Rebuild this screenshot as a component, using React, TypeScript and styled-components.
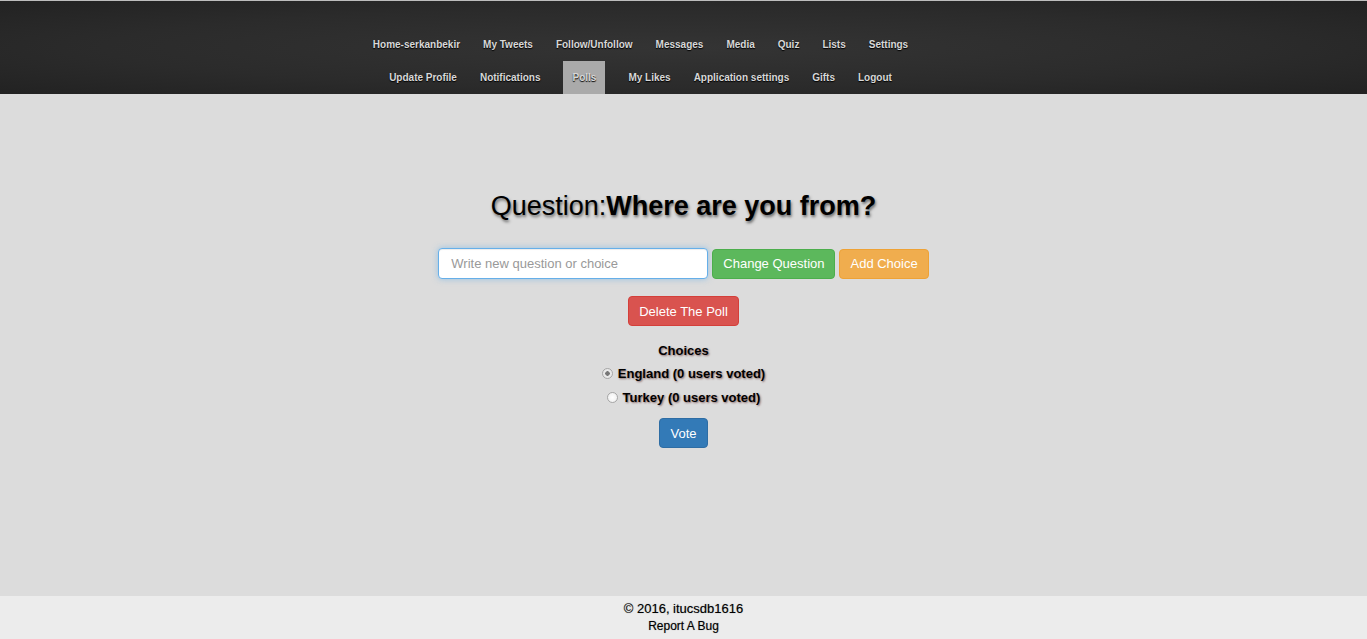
import styled, { createGlobalStyle } from "styled-components";

const GlobalStyle = createGlobalStyle`
    html, body {
        margin: 0;
        padding: 0;
        height: 100%;
    }

    body {
        background-color: #dcdcdc;
        font-family: "Liberation Sans", Arial, sans-serif;
    }

    #root {
        min-height: 100%;
        display: flex;
        flex-direction: column;
    }
`

const Page = styled.div`
    display: flex;
    flex-direction: column;
    min-height: 100vh;
`

const Header = styled.header`
    border-top: 1px solid #bdbdbd;
    height: 94px;
    box-sizing: border-box;
    padding-top: 27px;
    background: radial-gradient(ellipse at center, #343434 0%, #2b2b2b 60%, #222 100%);
`

const NavRow = styled.ul`
    display: flex;
    flex-direction: row;
    justify-content: center;
    gap: 3px;
    list-style: none;
    margin: 0;
    padding: 0 86px 0 0;
    height: 33px;
`

const NavItem = styled.li`
    padding: 0 10px;
    height: 33px;
`

const NavLink = styled.a<{ $active?: boolean }>`
    display: block;
    padding: ${(p) => (p.$active ? "0 9px" : "0")};
    height: 33px;
    line-height: 33px;
    font-size: 10px;
    font-weight: bold;
    color: #d8d8d8;
    text-shadow: 0 1px 1px #000;
    text-decoration: none;
    cursor: pointer;
    white-space: nowrap;
    background-color: ${(p) => (p.$active ? "#aaaaaa" : "transparent")};
`

const Main = styled.main`
    flex: 1;
    display: flex;
    flex-direction: column;
    align-items: center;
    padding-top: 97px;
`

const Title = styled.h1`
    margin: 0;
    font-size: 27px;
    line-height: 30px;
    font-weight: normal;
    color: #000;
    text-shadow: 1px 2px 3px #666;

    b {
        font-weight: bold;
    }
`

const FormRow = styled.div`
    display: flex;
    flex-direction: row;
    align-items: center;
    gap: 4px;
    margin-top: 27px;
`

const TextInput = styled.input`
    width: 270px;
    height: 31px;
    box-sizing: border-box;
    padding: 0 12px;
    font-family: "Liberation Sans", Arial, sans-serif;
    font-size: 13px;
    color: #555;
    background: #fff;
    border: 1px solid #66afe9;
    border-radius: 4px;
    outline: none;
    box-shadow: inset 0 1px 1px rgba(0, 0, 0, .075), 0 0 6px rgba(102, 175, 233, .6);

    &::placeholder {
        color: #999;
    }
`

const Button = styled.button<{ $color: string; $border: string }>`
    height: 30px;
    box-sizing: border-box;
    padding: 0 10px;
    font-family: "Liberation Sans", Arial, sans-serif;
    font-size: 13px;
    color: #fff;
    background-color: ${(p) => p.$color};
    border: 1px solid ${(p) => p.$border};
    border-radius: 4px;
    cursor: pointer;
    white-space: nowrap;
`

const DeleteButton = styled(Button)`
    margin-top: 17px;
`

const Choices = styled.div`
    display: flex;
    flex-direction: column;
    align-items: center;
    margin-top: 15px;
    font-size: 13px;
    font-weight: bold;
    color: #000;
    text-shadow: 1px 1px 2px #8a6a6a;

    h4 {
        margin: 0;
        font-size: 13px;
        line-height: 20px;
    }
`

const ChoiceLine = styled.label`
    display: flex;
    flex-direction: row;
    align-items: center;
    gap: 5px;
    height: 24px;
    cursor: pointer;
`

const Radio = styled.input`
    appearance: none;
    width: 11px;
    height: 11px;
    margin: 0;
    border: 1px solid #a6a6a6;
    border-radius: 50%;
    background: radial-gradient(circle, #fff 0%, #ececec 100%);
    box-sizing: border-box;

    &:checked {
        background: radial-gradient(circle, #777 0 2px, #e8e8e8 2.5px);
    }
`

const VoteButton = styled(Button)`
    margin-top: 9px;
`

const Footer = styled.footer`
    height: 43px;
    background-color: #ececec;
    display: flex;
    flex-direction: column;
    align-items: center;
    padding-top: 5px;
    box-sizing: border-box;
    color: #000;
    text-shadow: 0 0 1px #888;

    p {
        margin: 0;
        font-size: 13px;
        line-height: 16px;
    }

    a {
        font-size: 12px;
        line-height: 18px;
        color: #000;
        text-decoration: none;
    }
`

const row1 = ["Home-serkanbekir", "My Tweets", "Follow/Unfollow", "Messages", "Media", "Quiz", "Lists", "Settings"];
const row2 = ["Update Profile", "Notifications", "Polls", "My Likes", "Application settings", "Gifts", "Logout"];

const choices = [
    { name: "England", votes: 0, checked: true },
    { name: "Turkey", votes: 0, checked: false },
];

export default function App() {
    return (
        <Page>
            <GlobalStyle />
            <Header>
                <NavRow>
                    {row1.map((item) => (
                        <NavItem key={item}>
                            <NavLink>{item}</NavLink>
                        </NavItem>
                    ))}
                </NavRow>
                <NavRow>
                    {row2.map((item) => (
                        <NavItem key={item}>
                            <NavLink $active={item === "Polls"}>{item}</NavLink>
                        </NavItem>
                    ))}
                </NavRow>
            </Header>

            <Main>
                <Title>Question:<b>Where are you from?</b></Title>

                <FormRow>
                    <TextInput placeholder="Write new question or choice" />
                    <Button $color="#5cb85c" $border="#4cae4c">Change Question</Button>
                    <Button $color="#f0ad4e" $border="#eea236">Add Choice</Button>
                </FormRow>

                <DeleteButton $color="#d9534f" $border="#d43f3a">Delete The Poll</DeleteButton>

                <Choices>
                    <h4>Choices</h4>
                    {choices.map((c) => (
                        <ChoiceLine key={c.name}>
                            <Radio type="radio" name="choice" defaultChecked={c.checked} />
                            {c.name} ({c.votes} users voted)
                        </ChoiceLine>
                    ))}
                    <VoteButton $color="#337ab7" $border="#2e6da4">Vote</VoteButton>
                </Choices>
            </Main>

            <Footer>
                <p>© 2016, itucsdb1616</p>
                <a href="#">Report A Bug</a>
            </Footer>
        </Page>
    );
}
